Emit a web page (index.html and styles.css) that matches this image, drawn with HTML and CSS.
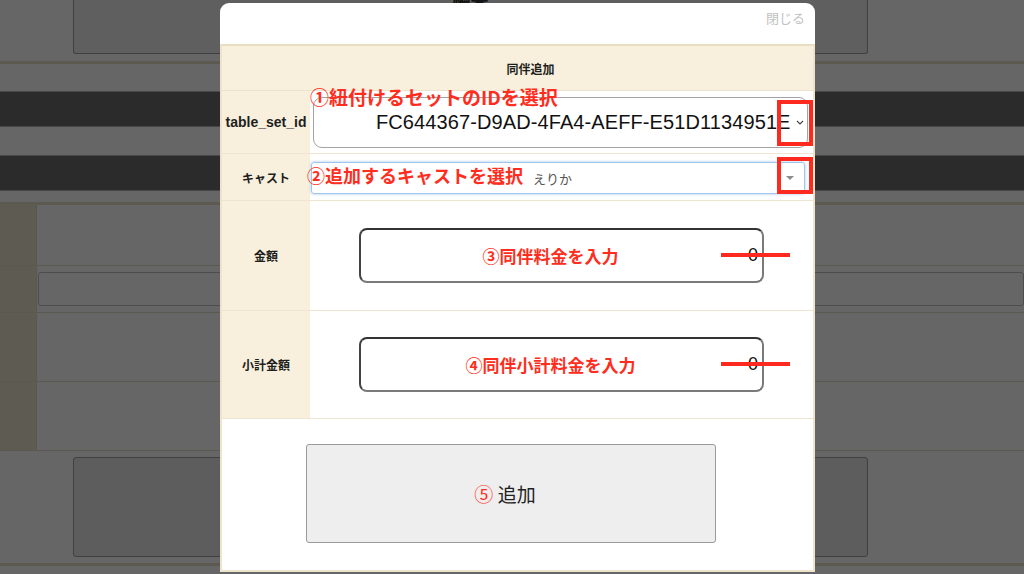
FILE: index.html
```html
<!DOCTYPE html>
<html lang="ja">
<head>
    <meta charset="UTF-8">
    <meta name="viewport" content="width=device-width, initial-scale=1.0">
    <title>同伴追加</title>
    <link rel="stylesheet" href="styles.css">
</head>
<body>
    <!-- 背景のページ（オーバーレイで暗くなっている） -->
    <div class="page">
        <div class="pg-head">
            <div class="pg-box">
                <div class="pg-title">編集</div>
            </div>
        </div>
        <div class="pg-rule"></div>
        <div class="pg-band"></div>
        <div class="pg-band second"></div>
        <div class="pg-table">
            <div class="pg-row h61"><div class="pg-th"></div><div class="pg-td"></div></div>
            <div class="pg-row h47"><div class="pg-th"></div><div class="pg-td"><div class="pg-input"></div></div></div>
            <div class="pg-row h69"><div class="pg-th"></div><div class="pg-td"></div></div>
            <div class="pg-row h69"><div class="pg-th"></div><div class="pg-td"></div></div>
        </div>
        <div class="pg-foot">
            <div class="pg-btn"></div>
        </div>
        <div class="pg-rule"></div>
    </div>

    <!-- モーダル -->
    <div class="modal">
        <div class="modal-head">
            <span class="close">閉じる</span>
        </div>
        <div class="modal-body">
            <div class="form-caption">同伴追加</div>

            <div class="form-row row-id">
                <div class="form-label latin">table_set_id</div>
                <div class="form-value">
                    <div class="select-id">
                        <span class="select-id-text">FC644367-D9AD-4FA4-AEFF-E51D1134951E</span>
                        <svg class="chevron" width="8" height="5" viewBox="0 0 8 5"><path d="M1 1 L4 4 L7 1" fill="none" stroke="#444" stroke-width="1.1"/></svg>
                    </div>
                    <span class="note note-1">①紐付けるセットのIDを選択</span>
                    <span class="mark mark-1"></span>
                </div>
            </div>

            <div class="form-row row-cast">
                <div class="form-label">キャスト</div>
                <div class="form-value">
                    <div class="select-cast">
                        <span class="select-cast-text">えりか</span>
                        <span class="tri"></span>
                    </div>
                    <span class="note note-2">②追加するキャストを選択</span>
                    <span class="mark mark-2"></span>
                </div>
            </div>

            <div class="form-row row-price">
                <div class="form-label">金額</div>
                <div class="form-value center">
                    <div class="num-input">
                        <span class="num-note">③同伴料金を入力</span>
                        <span class="num-val">0</span>
                    </div>
                    <span class="strike strike-1"></span>
                </div>
            </div>

            <div class="form-row row-sub">
                <div class="form-label">小計金額</div>
                <div class="form-value center">
                    <div class="num-input">
                        <span class="num-note">④同伴小計料金を入力</span>
                        <span class="num-val">0</span>
                    </div>
                    <span class="strike strike-2"></span>
                </div>
            </div>

            <div class="form-foot">
                <button class="add-button"><span class="num5">⑤</span> 追加</button>
            </div>
        </div>
    </div>
</body>
</html>
```

FILE: styles.css
```css
* {
    margin: 0;
    padding: 0;
    box-sizing: border-box;
    font-family: 'Noto Sans CJK JP', 'Liberation Sans', sans-serif;
}

body {
    background-color: #666666;
    width: 1024px;
    height: 574px;
    overflow: hidden;
    position: relative;
}

/* 背景ページ */
.pg-head {
    height: 61px;
    overflow: hidden;
}

.pg-box {
    display: flow-root;
    margin-left: 73px;
    width: 795px;
    height: 54px;
    background: #5f5f5f;
    border: 1px solid #404040;
    border-top: none;
    border-radius: 0 0 3px 3px;
    text-align: center;
}

.pg-title {
    margin-top: -14px;
    font-size: 18px;
    line-height: 20px;
    font-weight: bold;
    color: #141414;
}

.pg-rule {
    height: 3px;
    background: #5b5950;
}

.pg-band {
    margin-top: 27px;
    height: 36px;
    background: #2b2b2b;
    border-top: 1px solid #474747;
    border-bottom: 1px solid #474747;
}

.pg-band.second {
    margin-top: 28px;
}

.pg-table {
    margin-top: 11px;
    border-top: 3px solid #5b5950;
}

.pg-row {
    display: flex;
    border-bottom: 1px solid #5a584f;
}

.pg-row.h61 { height: 61px; }
.pg-row.h47 { height: 47px; }
.pg-row.h69 { height: 69px; }

.pg-th {
    width: 37px;
    background: #5e5b52;
    border-right: 1px solid #5a584f;
}

.pg-td {
    flex: 1;
    padding: 6px 0 0 1px;
}

.pg-input {
    height: 34px;
    border: 1px solid #4d4d4d;
    border-radius: 3px;
}

.pg-foot {
    height: 112px;
    padding-top: 6px;
}

.pg-btn {
    margin-left: 73px;
    width: 795px;
    height: 100px;
    background: #5d5d5d;
    border: 1px solid #404040;
    border-radius: 3px;
}

/* モーダル */
.modal {
    position: absolute;
    left: 220px;
    top: 3px;
    width: 595px;
    height: 569px;
    background: #fff;
    border-radius: 9px 9px 0 0;
    display: flex;
    flex-direction: column;
}

.modal-head {
    height: 41px;
    display: flex;
    justify-content: flex-end;
    padding: 6px 10px 0 0;
}

.close {
    font-size: 13px;
    line-height: 18px;
    color: #c2c2c2;
}

.modal-body {
    flex: 1;
    border: 2px solid #ede4cb;
    border-top: 2px solid #e8dec2;
    display: flex;
    flex-direction: column;
}

.form-caption {
    height: 45px;
    background: #f8f0dc;
    border-bottom: 1px solid #ebe3cc;
    text-align: center;
    padding-left: 26px;
    font-size: 12px;
    font-weight: bold;
    line-height: 45px;
    color: #1e1e1e;
}

.form-row {
    display: flex;
    border-bottom: 1px solid #ede5d1;
}

.row-id { height: 63px; }
.row-cast { height: 47px; }
.row-price { height: 110px; }
.row-sub { height: 108px; }

.form-label {
    width: 88px;
    background: #f8f0dc;
    display: flex;
    align-items: center;
    justify-content: center;
    font-size: 12px;
    font-weight: bold;
    color: #1e1e1e;
}

.form-label.latin {
    font-family: 'Liberation Sans', sans-serif;
    font-size: 14px;
}

.form-value {
    flex: 1;
    position: relative;
}

.form-value.center {
    display: flex;
    align-items: center;
    justify-content: center;
}

.select-id {
    margin: 6px 0 0 3px;
    width: 495px;
    height: 51px;
    border: 1px solid #a3a3a3;
    border-radius: 9px;
    display: flex;
    align-items: center;
    padding-left: 62px;
}

.select-id-text {
    font-family: 'Liberation Sans', sans-serif;
    font-size: 20px;
    color: #111;
    letter-spacing: 0.1px;
}

.chevron {
    margin-left: 5px;
}

.select-cast {
    margin: 8px 0 0 1px;
    width: 494px;
    height: 32px;
    border: 1px solid #9fc6ea;
    border-radius: 3px;
    box-shadow: 0 0 3px rgba(120, 170, 225, 0.7);
    display: flex;
    align-items: center;
    justify-content: space-between;
    padding: 0 10px 0 221px;
}

.select-cast-text {
    font-size: 13px;
    color: #555;
}

.tri {
    width: 0;
    height: 0;
    border-left: 4px solid transparent;
    border-right: 4px solid transparent;
    border-top: 4px solid #8c8c8c;
}

.num-input {
    width: 405px;
    height: 55px;
    border: 2px solid #7a7a7a;
    border-top-color: #333;
    border-left-color: #444;
    border-radius: 8px;
    display: flex;
    align-items: center;
    padding-right: 4px;
}

.num-note {
    flex: 1;
    text-align: center;
    font-size: 17px;
    font-weight: bold;
    color: #ff2d20;
    padding-right: 8px;
}

.num-val {
    font-family: 'Liberation Sans', sans-serif;
    font-size: 18px;
    color: #111;
}

/* 注釈（赤字・赤枠） */
.note {
    position: absolute;
    white-space: nowrap;
    font-weight: bold;
    color: #ff2d20;
    line-height: 22px;
}

.note-1 {
    left: 0;
    top: -5px;
    font-size: 19px;
}

.note-2 {
    left: -3px;
    top: 10px;
    font-size: 18px;
}

.mark {
    position: absolute;
    border: 4px solid #ff2a1f;
}

.mark-1 {
    left: 467px;
    top: 9px;
    width: 36px;
    height: 46px;
}

.mark-2 {
    left: 467px;
    top: 3px;
    width: 36px;
    height: 37px;
}

.strike {
    position: absolute;
    left: 411px;
    width: 69px;
    height: 4px;
    background: #ff2a1f;
}

.strike-1 { top: 52px; }
.strike-2 { top: 51px; }

.form-foot {
    flex: 1;
    padding: 25px 0 0 84px;
}

.add-button {
    width: 410px;
    height: 99px;
    background: #eeeeee;
    border: 1px solid #9a9a9a;
    border-radius: 3px;
    font-size: 19px;
    color: #222;
    padding-right: 12px;
}

.num5 {
    color: #ff2d20;
    font-size: 19px;
}
```
